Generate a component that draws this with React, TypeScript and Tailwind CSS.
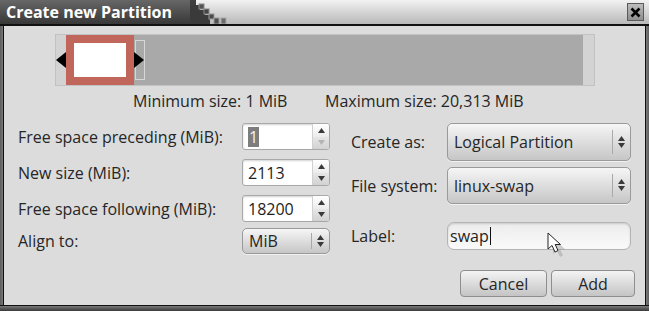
import React from 'react'

const FONT = "font-['Open_Sans','Noto_Sans',sans-serif]"

function Tri({ dir, disabled }: { dir: 'up' | 'down'; disabled?: boolean }) {
  const fill = disabled ? '#b4b4b4' : '#3a3a3a'
  return (
    <svg width="7" height="5" viewBox="0 0 7 5">
      {dir === 'up' ? <polygon points="3.5,0 7,5 0,5" fill={fill} /> : <polygon points="0,0 7,0 3.5,5" fill={fill} />}
    </svg>
  )
}

function Spin({ value, selected, downDisabled }: { value: string; selected?: boolean; downDisabled?: boolean }) {
  return (
    <div className="flex h-[27px] w-[88px] overflow-hidden rounded-[3px] border border-[#a8a8a8] bg-white shadow-[inset_0_1px_2px_rgba(0,0,0,0.18)]">
      <div className="flex flex-1 items-center pl-[5px] text-[16px] text-[#1e1e1e]">
        {selected ? <span className="bg-[#7d7d7d] px-[1px] leading-[20px] text-[#f2f2f2]">{value}</span> : value}
      </div>
      <div className="flex w-[17px] flex-col">
        <div className="flex flex-1 items-center justify-center border-l border-[#d0d0d0] bg-linear-to-b from-[#ffffff] to-[#ececec]">
          <Tri dir="up" />
        </div>
        <div className="flex flex-1 items-center justify-center border-l border-[#d0d0d0] bg-linear-to-b from-[#e6e6e6] to-[#d2d2d2]">
          <Tri dir="down" disabled={downDisabled} />
        </div>
      </div>
    </div>
  )
}

function Combo({ text, w, h }: { text: string; w: string; h: string }) {
  return (
    <div
      className={`flex ${w} ${h} items-center rounded-[5px] border border-[#9a9a9a] bg-linear-to-b from-[#f6f6f6] to-[#c6c6c6] shadow-[0_1px_0_rgba(255,255,255,0.6)]`}
    >
      <span className="flex-1 pl-[6px] text-[16px] text-[#262626]">{text}</span>
      <div className="flex h-[64%] w-[18px] flex-col items-center justify-center gap-[2px] border-l border-[#a9a9a9]">
        <Tri dir="up" />
        <Tri dir="down" />
      </div>
    </div>
  )
}

function Button({ label, w }: { label: string; w: string }) {
  return (
    <div
      className={`flex h-[27px] ${w} items-center justify-center rounded-[4px] border border-[#8e8e8e] bg-linear-to-b from-[#f4f4f4] to-[#c4c4c4] text-[16px] text-[#262626]`}
    >
      {label}
    </div>
  )
}

export default function App() {
  return (
    <div className={`relative flex h-[311px] w-[649px] flex-col overflow-hidden bg-[#4a4a4a] ${FONT}`}>
      {/* title bar */}
      <div className="flex h-[26px] border-b-2 border-[#111]">
        <div className="flex w-[190px] items-center bg-linear-to-b from-[#676767] to-[#383838] pl-[6px] text-[16px] leading-none font-bold text-white">
          Create new Partition
        </div>
        <div className="relative flex flex-1 items-center justify-end bg-linear-to-b from-[#f2f2f2] to-[#b9b9b9] pr-[5px]">
          <svg className="absolute top-0 left-0" width="48" height="24" viewBox="0 0 48 24">
            <rect x="0" y="0" width="6" height="5" fill="#3e3e3e" />
            <rect x="0" y="5" width="10" height="19" fill="#3a3a3a" />
            <rect x="10" y="10" width="5" height="14" fill="#3a3a3a" />
            <rect x="9" y="4" width="5" height="5" fill="#555" stroke="#888" strokeWidth="1" />
            <rect x="14" y="9" width="5" height="5" fill="#444" stroke="#888" strokeWidth="1" />
            <rect x="15" y="15" width="5" height="9" fill="#3a3a3a" />
            <rect x="19" y="14" width="5" height="5" fill="#4a4a4a" stroke="#999" strokeWidth="1" />
            <rect x="24" y="18" width="5" height="6" fill="#505050" stroke="#999" strokeWidth="1" />
            <rect x="31" y="18" width="5" height="6" fill="#6a6a6a" stroke="#aaa" strokeWidth="1" />
          </svg>
          <div className="flex h-[18px] w-[17px] items-center justify-center border border-[#5a5a5a] bg-linear-to-b from-[#bcbcbc] to-[#8e8e8e]">
            <svg width="11" height="11" viewBox="0 0 11 11">
              <path d="M1.5 1.5 L9.5 9.5 M9.5 1.5 L1.5 9.5" stroke="#000" strokeWidth="2.6" />
            </svg>
          </div>
        </div>
      </div>

      {/* body */}
      <div className="flex flex-1">
        <div className="w-[3px] bg-linear-to-r from-[#5e5e5e] to-[#7a7a7a]" />
        <div className="w-[1px] bg-[#111]" />
        <div className="flex flex-1 flex-col bg-[#dcdcdc]">
          {/* partition bar */}
          <div className="mt-[8px] ml-[51px] flex h-[52px] w-[540px] border border-[#c2c2c2] bg-[#d3d3d3]">
            <div className="flex w-[10px] items-center">
              <svg width="10" height="16" viewBox="0 0 10 16">
                <polygon points="0,8 10,0 10,16" fill="#000" />
              </svg>
            </div>
            <div className="w-[68px] bg-[#c1665b] p-[8px]">
              <div className="h-full w-full bg-white" />
            </div>
            <div className="flex flex-1 items-center bg-[#a9a9a9]">
              <svg width="12" height="50" viewBox="0 0 12 50">
                <rect x="1.5" y="5.5" width="9" height="39" fill="none" stroke="#d6d6d6" />
                <polygon points="0,17 10,25 0,33" fill="#000" />
              </svg>
            </div>
            <div className="w-[11px]" />
          </div>

          {/* sizes */}
          <div className="mt-[5px] flex h-[20px] items-center text-[16px] text-[#262626]">
            <span className="ml-[129px] w-[192px]">Minimum size: 1 MiB</span>
            <span>Maximum size: 20,313 MiB</span>
          </div>

          {/* form */}
          <div className="mt-[12px] flex text-[16px] text-[#262626]">
            <div className="ml-[14px] flex flex-col">
              <div className="flex h-[27px] items-center">
                <span className="w-[224px]">Free space preceding (MiB):</span>
                <Spin value="1" selected downDisabled />
              </div>
              <div className="mt-[9px] flex h-[27px] items-center">
                <span className="w-[224px]">New size (MiB):</span>
                <Spin value="2113" />
              </div>
              <div className="mt-[9px] flex h-[27px] items-center">
                <span className="w-[224px]">Free space following (MiB):</span>
                <Spin value="18200" />
              </div>
              <div className="mt-[6px] flex h-[26px] items-center">
                <span className="w-[224px]">Align to:</span>
                <Combo text="MiB" w="w-[88px]" h="h-[26px]" />
              </div>
            </div>

            <div className="ml-[21px] flex flex-1 flex-col">
              <div className="flex h-[38px] items-center">
                <span className="w-[96px]">Create as:</span>
                <Combo text="Logical Partition" w="w-[184px]" h="h-[38px]" />
              </div>
              <div className="mt-[6px] flex h-[37px] items-center">
                <span className="w-[96px]">File system:</span>
                <Combo text="linux-swap" w="w-[184px]" h="h-[37px]" />
              </div>
              <div className="mt-[18px] flex h-[28px] items-center">
                <span className="w-[96px]">Label:</span>
                <div className="flex h-[28px] w-[184px] items-center rounded-[7px] border border-[#b4b4b4] bg-linear-to-b from-[#ececec] to-[#fafafa] pl-[2px] shadow-[inset_0_1px_2px_rgba(0,0,0,0.15)]">
                  <span className="text-[#1e1e1e]">swap</span>
                  <span className="ml-[1px] h-[18px] w-[1px] bg-[#111]" />
                </div>
              </div>
              <div className="mt-[20px] flex justify-end gap-[4px] pr-[10px]">
                <Button label="Cancel" w="w-[87px]" />
                <Button label="Add" w="w-[84px]" />
              </div>
            </div>
          </div>
        </div>
        <div className="w-[1px] bg-[#111]" />
        <div className="w-[3px] bg-linear-to-r from-[#7a7a7a] to-[#5e5e5e]" />
      </div>
      <div className="h-[6px] border-t border-[#111] bg-linear-to-b from-[#7a7a7a] to-[#3a3a3a]" />

      {/* mouse pointer */}
      <svg className="absolute top-[232px] left-[546px]" width="26" height="28" viewBox="0 0 26 28">
        <path d="M4 3 L4 19 L8 15.5 L11 22 L14 20.5 L11.2 14.5 L16.5 14.5 Z" fill="#9a9a9a" opacity="0.45" transform="translate(3 3)" />
        <path d="M2 1 L2 17 L6 13.5 L9 20 L12 18.5 L9.2 12.5 L14.5 12.5 Z" fill="#fff" stroke="#222" strokeWidth="1" strokeLinejoin="round" />
      </svg>
    </div>
  )
}
